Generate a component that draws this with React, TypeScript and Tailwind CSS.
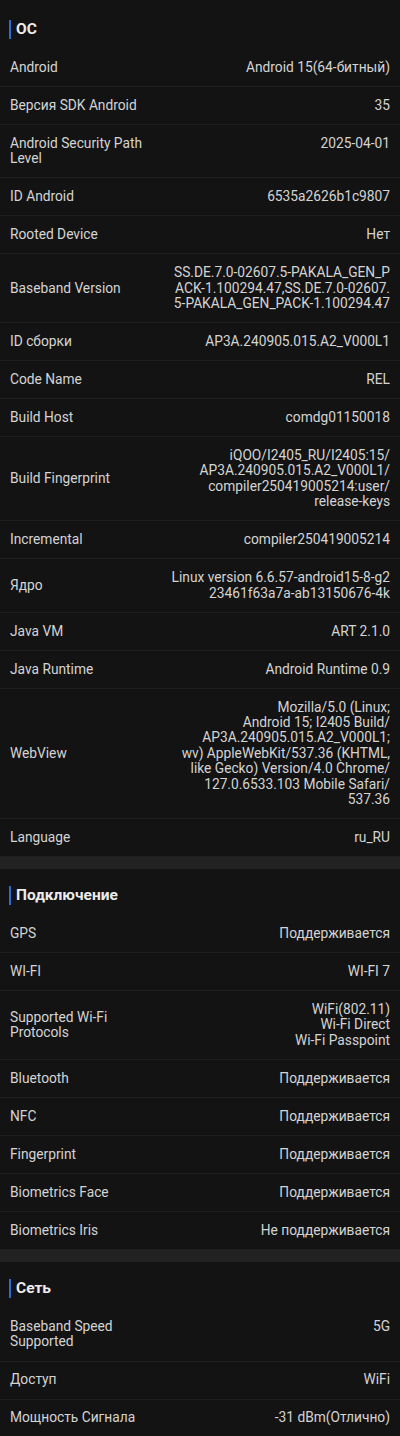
import React from "react";

type Row = { label: string[]; value: string[] };

const os: Row[] = [
  { label: ["Android"], value: ["Android 15(64-битный)"] },
  { label: ["Версия SDK Android"], value: ["35"] },
  { label: ["Android Security Path", "Level"], value: ["2025-04-01"] },
  { label: ["ID Android"], value: ["6535a2626b1c9807"] },
  { label: ["Rooted Device"], value: ["Нет"] },
  {
    label: ["Baseband Version"],
    value: [
      "SS.DE.7.0-02607.5-PAKALA_GEN_P",
      "ACK-1.100294.47,SS.DE.7.0-02607.",
      "5-PAKALA_GEN_PACK-1.100294.47",
    ],
  },
  { label: ["ID сборки"], value: ["AP3A.240905.015.A2_V000L1"] },
  { label: ["Code Name"], value: ["REL"] },
  { label: ["Build Host"], value: ["comdg01150018"] },
  {
    label: ["Build Fingerprint"],
    value: [
      "iQOO/I2405_RU/I2405:15/",
      "AP3A.240905.015.A2_V000L1/",
      "compiler250419005214:user/",
      "release-keys",
    ],
  },
  { label: ["Incremental"], value: ["compiler250419005214"] },
  {
    label: ["Ядро"],
    value: ["Linux version 6.6.57-android15-8-g2", "23461f63a7a-ab13150676-4k"],
  },
  { label: ["Java VM"], value: ["ART 2.1.0"] },
  { label: ["Java Runtime"], value: ["Android Runtime 0.9"] },
  {
    label: ["WebView"],
    value: [
      "Mozilla/5.0 (Linux;",
      "Android 15; I2405 Build/",
      "AP3A.240905.015.A2_V000L1;",
      "wv) AppleWebKit/537.36 (KHTML,",
      "like Gecko) Version/4.0 Chrome/",
      "127.0.6533.103 Mobile Safari/",
      "537.36",
    ],
  },
  { label: ["Language"], value: ["ru_RU"] },
];

const conn: Row[] = [
  { label: ["GPS"], value: ["Поддерживается"] },
  { label: ["WI-FI"], value: ["WI-FI 7"] },
  {
    label: ["Supported Wi-Fi", "Protocols"],
    value: ["WiFi(802.11)", "Wi-Fi Direct", "Wi-Fi Passpoint"],
  },
  { label: ["Bluetooth"], value: ["Поддерживается"] },
  { label: ["NFC"], value: ["Поддерживается"] },
  { label: ["Fingerprint"], value: ["Поддерживается"] },
  { label: ["Biometrics Face"], value: ["Поддерживается"] },
  { label: ["Biometrics Iris"], value: ["Не поддерживается"] },
];

const net: Row[] = [
  { label: ["Baseband Speed", "Supported"], value: ["5G"] },
  { label: ["Доступ"], value: ["WiFi"] },
  { label: ["Мощность Сигнала"], value: ["-31 dBm(Отлично)"] },
];

const InfoRow = ({ row }: { row: Row }) => (
  <div className="flex items-center justify-between px-[10px] py-[10.8px] border-b border-[#1e1e1e] text-[13.75px] leading-[15.4px] text-[#d4d4d4]">
    <div className="w-[150px] shrink-0 whitespace-nowrap">
      {row.label.map((l, i) => (
        <div key={i}>{l}</div>
      ))}
    </div>
    <div className="self-start text-right whitespace-nowrap">
      {row.value.map((v, i) => (
        <div key={i}>{v}</div>
      ))}
    </div>
  </div>
);

const Section = ({
  title,
  rows,
  first,
}: {
  title: string;
  rows: Row[];
  first?: boolean;
}) => (
  <div>
    <div
      className={
        first
          ? "flex items-center gap-[5px] px-[9px] pt-[20px] pb-[10px]"
          : "flex items-center gap-[5px] px-[9px] pt-[17px] pb-[10px]"
      }
    >
      <div className="w-[2px] h-[19px] bg-[#2f6bd0]" />
      <span className="text-[15.5px] leading-[19px] font-bold text-[#ececec]">
        {title}
      </span>
    </div>
    {rows.map((r, i) => (
      <InfoRow key={i} row={r} />
    ))}
  </div>
);

export default function App() {
  return (
    <div
      className="w-[400px] min-h-[1436px] bg-[#131313]"
      style={{ fontFamily: "Roboto, 'Noto Sans', sans-serif" }}
    >
      <Section title="ОС" rows={os} first />
      <div className="h-[12px] bg-[#222222]" />
      <Section title="Подключение" rows={conn} />
      <div className="h-[12px] bg-[#222222]" />
      <Section title="Сеть" rows={net} />
    </div>
  );
}
